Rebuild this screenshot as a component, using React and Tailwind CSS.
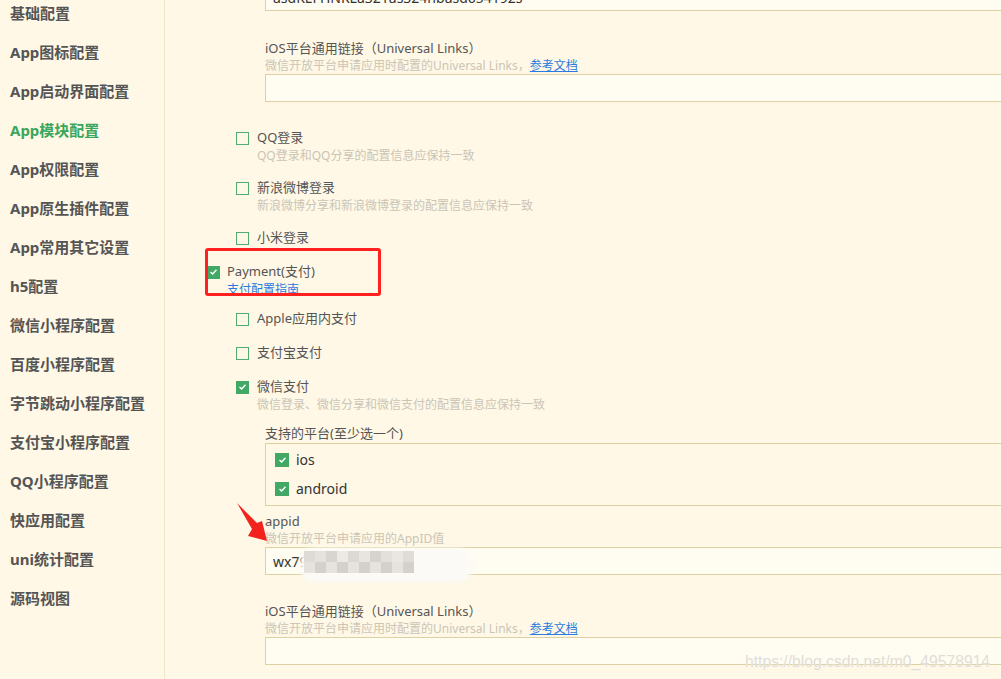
import React from "react";

const FONT = { fontFamily: '"Noto Sans", "Noto Sans CJK SC", sans-serif' };

const menu = [
  "基础配置",
  "App图标配置",
  "App启动界面配置",
  "App模块配置",
  "App权限配置",
  "App原生插件配置",
  "App常用其它设置",
  "h5配置",
  "微信小程序配置",
  "百度小程序配置",
  "字节跳动小程序配置",
  "支付宝小程序配置",
  "QQ小程序配置",
  "快应用配置",
  "uni统计配置",
  "源码视图",
];

function Box({ checked, big }) {
  const size = big ? "w-[14px] h-[14px]" : "w-[13px] h-[13px]";
  if (checked) {
    return (
      <span className={`${size} shrink-0 bg-[#42a865] flex items-center justify-center`}>
        <svg width="9" height="8" viewBox="0 0 9 8">
          <polyline points="1.5,4 3.6,6 7.5,1.8" fill="none" stroke="#fff" strokeWidth="1.4" />
        </svg>
      </span>
    );
  }
  return <span className={`${size} shrink-0 border border-[#52ad70]`} />;
}

function Option({ label, desc, checked, className = "" }) {
  return (
    <div className={`ml-[29px] ${className}`}>
      <div className="flex items-center h-[20px] gap-[8px]">
        <Box checked={checked} />
        <span className="text-[13px] text-[#555]">{label}</span>
      </div>
      {desc && (
        <div className="pl-[21px] h-[16px] leading-[16px] text-[12px] text-[#cbc5b6]">{desc}</div>
      )}
    </div>
  );
}

function Field({ label, desc, link, value, className = "" }) {
  return (
    <div className={`ml-[58px] ${className}`}>
      <div className="h-[20px] leading-[20px] text-[13px] text-[#555]">{label}</div>
      <div className="h-[16px] leading-[16px] text-[12px] text-[#cbc5b6]">
        {desc}
        {link && <span className="text-[#2a7be0] underline">{link}</span>}
      </div>
      <div className="h-[28px] w-[780px] border border-[#ddd0a3] bg-[#fffcf2] px-[7px] flex items-center text-[14px] text-[#333]">
        {value}
      </div>
    </div>
  );
}

export default function App() {
  return (
    <div className="relative w-[1001px] h-[679px] overflow-hidden bg-[#fff8e6] flex" style={FONT}>
      {/* ===== Sidebar ===== */}
      <aside className="w-[165px] shrink-0 border-r border-[#f1e7c8]">
        <div className="-mt-[6px]">
          {menu.map((m, i) => (
            <div
              key={m}
              className={`h-[39px] flex items-center pl-[10px] text-[15px] font-bold ${
                i === 3 ? "text-[#3aa65c]" : "text-[#555]"
              }`}
            >
              {m}
            </div>
          ))}
        </div>
      </aside>

      {/* ===== Main ===== */}
      <main className="flex-1 pl-[42px]">
        <div className="-mt-[17px]">
          <div className="ml-[58px] h-[28px] w-[780px] border border-[#ddd0a3] bg-[#fffcf2] px-[7px] flex items-center text-[14px] text-[#333]">
            asdKEFHNKLa321as324hbasd654192s
          </div>

          <Field
            className="mt-[27px]"
            label="iOS平台通用链接（Universal Links）"
            desc="微信开放平台申请应用时配置的Universal Links，"
            link="参考文档"
          />

          <Option className="mt-[26px]" label="QQ登录" desc="QQ登录和QQ分享的配置信息应保持一致" />
          <Option className="mt-[14px]" label="新浪微博登录" desc="新浪微博分享和新浪微博登录的配置信息应保持一致" />
          <Option className="mt-[14px]" label="小米登录" />

          {/* Payment */}
          <div className="mt-[14px]">
            <div className="flex items-center h-[20px] gap-[7px]">
              <Box checked />
              <span className="text-[13px] text-[#555]">Payment(支付)</span>
            </div>
            <div className="pl-[20px] h-[16px] leading-[16px] text-[12px] text-[#2a7be0] underline">支付配置指南</div>
          </div>

          <Option className="mt-[11px]" label="Apple应用内支付" />
          <Option className="mt-[14px]" label="支付宝支付" />
          <Option className="mt-[14px]" label="微信支付" checked desc="微信登录、微信分享和微信支付的配置信息应保持一致" />

          <div className="ml-[58px] mt-[11px]">
            <div className="h-[19px] leading-[19px] text-[13px] text-[#555]">支持的平台(至少选一个)</div>
            <div className="h-[63px] w-[780px] border border-[#ddd0a3] pl-[9px] pt-[1px]">
              {["ios", "android"].map((p) => (
                <div key={p} className="h-[29px] flex items-center gap-[7px]">
                  <Box checked big />
                  <span className="text-[14px] text-[#333]">{p}</span>
                </div>
              ))}
            </div>
          </div>

          <div className="ml-[58px] mt-[6px]">
            <div className="h-[19px] leading-[19px] text-[13px] text-[#555]">appid</div>
            <div className="h-[16px] leading-[16px] text-[12px] text-[#cbc5b6]">微信开放平台申请应用的AppID值</div>
            <div className="h-[28px] w-[780px] border border-[#ddd0a3] bg-[#fffcf2] px-[7px] flex items-center text-[14px] text-[#333]">
              wx79
            </div>
          </div>

          <Field
            className="mt-[26px]"
            label="iOS平台通用链接（Universal Links）"
            desc="微信开放平台申请应用时配置的Universal Links，"
            link="参考文档"
          />
        </div>
      </main>

      {/* ===== Annotations ===== */}
      <div className="absolute left-[205px] top-[248px] w-[176px] h-[48px] border-[3px] border-[#ff2020] rounded-[3px]" />

      <svg className="absolute left-[230px] top-[498px]" width="45" height="50" viewBox="0 0 45 50">
        <polygon points="7,5 27,25 32,23 37,43 18,38 22,31" fill="#f2231c" />
      </svg>

      {/* blurred appid */}
      <div className="absolute left-[300px] top-[548px] w-[172px] h-[34px] rounded-[14px] bg-[#fbfaf6] blur-[2px]" />
      <div className="absolute left-[304px] top-[551px] flex blur-[0.6px]">
        {["#dedbd6", "#e5e2dd", "#d8d4cf", "#ece9e4", "#dcd8d3", "#e8e5e0", "#d6d2cd", "#e3e0db", "#eae7e2", "#dfdbd6"].map(
          (c, i) => (
            <div key={i} className="flex flex-col">
              <div className="w-[11px] h-[11px]" style={{ background: c }} />
              <div className="w-[11px] h-[11px]" style={{ background: i % 2 ? "#d4d0cb" : "#e6e3de" }} />
            </div>
          )
        )}
      </div>

      <div
        className="absolute left-[745px] top-[650px] text-[15.7px] text-[#e2ddd3]"
        style={{ fontFamily: '"Liberation Sans", Arial, sans-serif', textShadow: "0 0 1px #fff" }}
      >
        https://blog.csdn.net/m0_49578914
      </div>
    </div>
  );
}
